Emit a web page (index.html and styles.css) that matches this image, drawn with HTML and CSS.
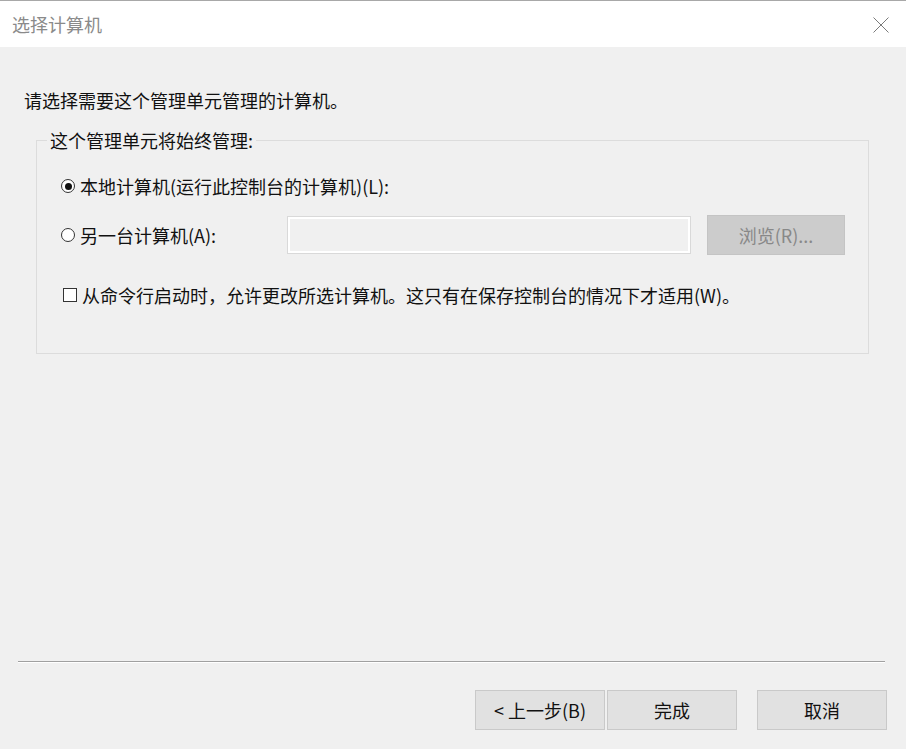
FILE: index.html
```html
<!DOCTYPE html>
<html lang="zh-CN">
  <head>
    <meta charset="UTF-8" />
    <meta name="viewport" content="width=device-width, initial-scale=1.0" />
    <title>选择计算机</title>

    <link rel="stylesheet" href="styles.css">
  </head>
  <body>
    <div class="titlebar">
      <span class="title">选择计算机</span>
      <svg class="close" width="16" height="16" viewBox="0 0 16 16">
        <path d="M0.5 0.5 L15.5 15.5 M15.5 0.5 L0.5 15.5" stroke="#7a7a7a" stroke-width="1" fill="none" />
      </svg>
    </div>

    <div class="main">
      <p class="intro">请选择需要这个管理单元管理的计算机。</p>

      <fieldset class="group">
        <legend>这个管理单元将始终管理:</legend>

        <div class="row first">
          <span class="radio checked"></span>
          <span>本地计算机(运行此控制台的计算机)(L):</span>
        </div>

        <div class="row second">
          <span class="label">
            <span class="radio"></span>
            <span>另一台计算机(A):</span>
          </span>
          <span class="input"></span>
          <span class="browse">浏览(R)...</span>
        </div>

        <div class="row third">
          <span class="check"></span>
          <span>从命令行启动时，允许更改所选计算机。这只有在保存控制台的情况下才适用(W)。</span>
        </div>
      </fieldset>
    </div>

    <div class="footer">
      <div class="sep"></div>
      <div class="buttons">
        <button class="btn">&lt; 上一步(B)</button>
        <button class="btn">完成</button>
        <button class="btn cancel">取消</button>
      </div>
    </div>
  </body>
</html>
```

FILE: styles.css
```css
*,
*::before,
*::after {
  box-sizing: border-box;
  margin: 0;
  padding: 0;
}

body {
  width: 906px;
  height: 749px;
  display: flex;
  flex-direction: column;
  background-color: #f0f0f0;
  font-family: "Noto Sans CJK SC", "Noto Sans", sans-serif;
  font-size: 18px;
  line-height: 24px;
  color: #111;
  overflow: hidden;
}

.titlebar {
  height: 47px;
  background-color: #fff;
  border-top: 1px solid #a8a8a8;
  display: flex;
  align-items: center;
  justify-content: space-between;
  padding: 0 17px 0 12px;
}

.title {
  color: #8a8a8a;
}

.close {
  margin-top: 2px;
}

.main {
  flex: 1;
  padding: 41px 0 0 24px;
}

.group {
  margin: 16px 0 0 12px;
  width: 833px;
  height: 226px;
  border: 1px solid #dcdcdc;
  padding: 22px 0 0 24px;
}

/* legend sits near the left edge, not at the content padding */
.group legend {
  margin-left: -14px;
  padding: 0 3px;
}

.row {
  display: flex;
  align-items: center;
}

.second {
  margin-top: 17px;
  height: 40px;
}

.third {
  margin-top: 28px;
  padding-left: 2px;
}

.label {
  width: 226px;
  display: flex;
  align-items: center;
}

.radio {
  width: 14px;
  height: 14px;
  border: 1px solid #333;
  border-radius: 50%;
  background-color: #fff;
  margin-right: 5px;
  display: grid;
  place-items: center;
}

.radio.checked::after {
  content: "";
  width: 7px;
  height: 7px;
  border-radius: 50%;
  background-color: #111;
}

.check {
  width: 14px;
  height: 14px;
  border: 1px solid #333;
  background-color: #fff;
  margin-right: 5px;
}

.input {
  width: 404px;
  height: 38px;
  border: 1px solid #d9d9d9;
  box-shadow: inset 0 0 0 2px #fff;
  background-color: #f0f0f0;
}

.browse {
  margin-left: 16px;
  width: 138px;
  height: 40px;
  background-color: #cccccc;
  border: 1px solid #c4c4c4;
  color: #888;
  display: grid;
  place-items: center;
}

.footer {
  padding-bottom: 19px;
}

.sep {
  margin: 0 21px 0 18px;
  height: 2px;
  border-top: 1px solid #a0a0a0;
  border-bottom: 1px solid #fff;
}

.buttons {
  margin-top: 27px;
  display: flex;
  justify-content: flex-end;
  gap: 2px;
  padding-right: 19px;
}

.btn {
  width: 130px;
  height: 40px;
  background-color: #e1e1e1;
  border: 1px solid #c9c9c9;
  font-family: inherit;
  font-size: 18px;
  color: #111;
}

.cancel {
  margin-left: 18px;
}
```
